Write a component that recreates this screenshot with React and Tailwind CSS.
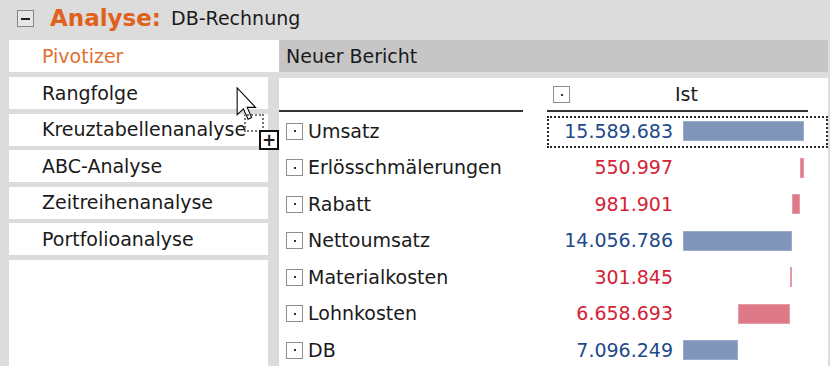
import React from 'react';

const font = "font-['DejaVu_Sans',sans-serif]";

const methods = ['Rangfolge', 'Kreuztabellenanalyse', 'ABC-Analyse', 'Zeitreihenanalyse', 'Portfolioanalyse'];

// waterfall rows: value, sign (+ blue / - red)
const rows = [
    { label: 'Umsatz', value: 15589683, neg: false },
    { label: 'Erlösschmälerungen', value: 550997, neg: true },
    { label: 'Rabatt', value: 981901, neg: true },
    { label: 'Nettoumsatz', value: 14056786, neg: false },
    { label: 'Materialkosten', value: 301845, neg: true },
    { label: 'Lohnkosten', value: 6658693, neg: true },
    { label: 'DB', value: 7096249, neg: false },
];

const SCALE = 121 / 15589683;

const fmt = (n) => n.toString().replace(/\B(?=(\d{3})+(?!\d))/g, '.');

const DotBox = () => (
    <div className="w-[17px] h-[17px] border border-[#8e8e8e] bg-white flex items-center justify-center shrink-0">
        <div className="w-[2px] h-[2px] bg-[#333]" />
    </div>
);

const Bar = ({ row, start }) => {
    const w = Math.max(row.value * SCALE, 1.5);
    const left = row.neg ? start - w : 0;
    return (
        <div className="relative w-[125px] h-[20px]">
            <div
                className={`absolute top-0 h-[20px] border ${row.neg ? 'bg-[#de7a87] border-[#e89aa4]' : 'bg-[#7f95b9] border-[#9cadc9]'}`}
                style={{ left, width: w }}
            />
        </div>
    );
};

export default function App() {
    // running end position for the waterfall
    let pos = 0;
    const starts = rows.map((r) => {
        if (!r.neg) {
            pos = r.value * SCALE;
            return 0;
        }
        const s = pos;
        pos = pos - r.value * SCALE;
        return s;
    });

    return (
        <div className={`w-[830px] h-[366px] bg-[#dcdcdc] overflow-hidden relative text-[#1a1a1a] ${font}`}>
            {/* Title */}
            <div className="h-[40px] flex items-center pb-[3px]">
                <div className="ml-[17px] w-[17px] h-[17px] border border-[#858585] bg-[#e6e6e6] flex items-center justify-center">
                    <div className="w-[9px] h-[2px] bg-[#222]" />
                </div>
                <span className="ml-[16px] text-[23px] font-bold text-[#e0611c] leading-none">Analyse:</span>
                <span className="ml-[10px] text-[19px] leading-none">DB-Rechnung</span>
            </div>

            {/* Tab row */}
            <div className="flex h-[32px]">
                <div className="ml-[9px] w-[270px] bg-white flex items-center pl-[33px] text-[19px] text-[#e0702e] leading-none">
                    Pivotizer
                </div>
                <div className="w-[549px] bg-[#c6c6c6] flex items-center pl-[7px] text-[19px] leading-none">
                    Neuer Bericht
                </div>
            </div>

            <div className="flex">
                {/* Method list */}
                <div className="ml-[9px] w-[259px] pt-[5px] flex flex-col gap-[4.6px]">
                    {methods.map((m) => (
                        <div key={m} className="h-[32px] bg-white flex items-center pl-[33px] text-[19px] leading-none">
                            {m}
                        </div>
                    ))}
                    <div className="h-[120px] bg-white" />
                </div>

                {/* Report */}
                <div className="ml-[11px] w-[549px] mt-[6px] h-[300px] bg-white">
                    <div className="flex h-[35px]">
                        <div className="w-[244px] h-[34px] border-b-2 border-[#333]" />
                        <div className="ml-[24px] w-[261px] h-[34px] border-b-2 border-[#333] flex items-center pt-[1px]">
                            <div className="ml-[6px]"><DotBox /></div>
                            <span className="ml-[105px] text-[19px] leading-none">Ist</span>
                        </div>
                    </div>

                    {rows.map((r, i) => (
                        <div key={r.label} className="flex h-[36.5px] items-center">
                            <div className="w-[244px] flex items-center">
                                <div className="ml-[7px]"><DotBox /></div>
                                <span className="ml-[5px] text-[19px] leading-none">{r.label}</span>
                            </div>
                            <div className="ml-[24px] w-[281px] h-full flex items-center relative">
                                {i === 0 && (
                                    <div className="absolute left-0 right-0 top-[3px] bottom-[2px] border-2 border-dotted border-[#2a2a2a]" />
                                )}
                                <span className={`w-[126px] text-right text-[19px] leading-none ${r.neg ? 'text-[#d42236]' : 'text-[#1e4a8a]'}`}>
                                    {fmt(r.value)}
                                </span>
                                <div className="ml-[10px]">
                                    <Bar row={r} start={starts[i]} />
                                </div>
                            </div>
                        </div>
                    ))}
                </div>
            </div>

            {/* drag cursor overlay */}
            <svg className="absolute left-[236px] top-[87px]" width="22" height="34" viewBox="0 0 12 19">
                <path d="M0.5 0.5 L0.5 15.5 L4 12.2 L6.6 18 L8.6 17.1 L6.1 11.4 L10.8 11.4 Z" fill="white" stroke="black" strokeWidth="0.6" />
            </svg>
            <div className="absolute left-[244px] top-[114px] w-[20px] h-[18px] border-2 border-dotted border-[#777]" />
            <div className="absolute left-[259px] top-[130px] w-[20px] h-[20px] border-2 border-[#111] bg-white flex items-center justify-center text-[17px] font-bold leading-none">
                +
            </div>
        </div>
    );
}
